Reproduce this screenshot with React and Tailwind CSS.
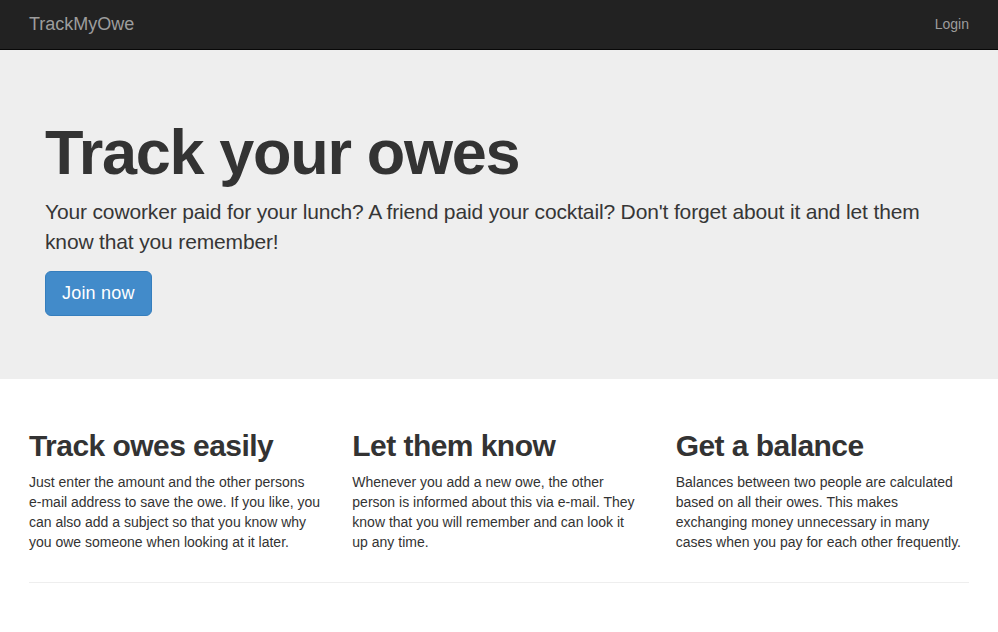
import React from 'react';

const features = [
  {
    title: 'Track owes easily',
    text: (
      <>
        Just enter the amount and the other persons <span className="whitespace-nowrap">e-mail</span> address to save
        the owe. If you like, you can also add a subject so that you know why you owe someone when looking at it later.
      </>
    ),
  },
  {
    title: 'Let them know',
    text: (
      <>
        Whenever you add a new owe, the other person is informed about this via e-mail. They know that you will
        remember and can look it
        <br />
        up any time.
      </>
    ),
  },
  {
    title: 'Get a balance',
    text: 'Balances between two people are calculated based on all their owes. This makes exchanging money unnecessary in many cases when you pay for each other frequently.',
  },
];

const App = () => {
  return (
    <div className="min-h-screen bg-white text-[#333] font-['Liberation_Sans',Arial,sans-serif] text-[14px] leading-[20px]">
      {/* Navbar */}
      <nav className="h-[50px] bg-[#222] border-b border-[#080808]">
        <div className="w-[970px] mx-auto px-[15px] h-full flex items-center justify-between">
          <a className="text-[18px] leading-[20px] text-[#9d9d9d] -mt-px">TrackMyOwe</a>
          <a className="text-[14px] leading-[20px] text-[#9d9d9d] -mt-px">Login</a>
        </div>
      </nav>

      {/* Jumbotron */}
      <div className="bg-[#eee] pt-[48px] pb-[48px] mb-[30px]">
        <div className="w-[970px] mx-auto px-[31px]">
          <h1 className="mt-[20px] mb-[10px] text-[63px] leading-[69px] font-bold tracking-[-1.3px]">Track your owes</h1>
          <p className="mb-[14px] text-[21px] leading-[30px] tracking-[-0.15px] text-[#363636]">
            Your coworker paid for your lunch? A friend paid your cocktail? Don't forget about it and let them know that you remember!
          </p>
          <p className="mb-[15px]">
            <a className="inline-block px-[16px] py-[10px] text-[18px] leading-[23px] tracking-[0.2px] text-white bg-[#428bca] border border-[#357ebd] rounded-[6px]">
              Join now
            </a>
          </p>
        </div>
      </div>

      {/* Features */}
      <div className="w-[970px] mx-auto px-[15px]">
        <div className="grid grid-cols-3 -mx-[15px]">
          {features.map((f) => (
            <div key={f.title} className="px-[15px]">
              <h2 className="mt-[20px] mb-[10px] text-[30px] leading-[33px] font-bold tracking-[-0.55px]">{f.title}</h2>
              <p className="mb-[10px]">{f.text}</p>
            </div>
          ))}
        </div>
        <hr className="mt-[20px] mb-[20px] border-0 border-t border-[#eee]" />
      </div>
    </div>
  );
};

export default App;
